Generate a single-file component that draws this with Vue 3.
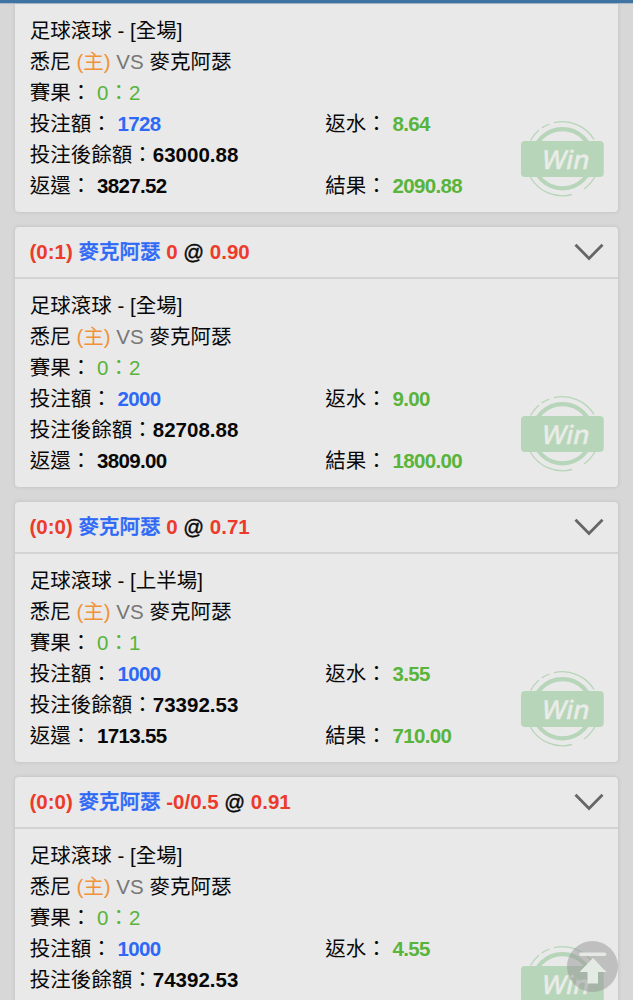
<template>
    <div class="page">
        <div class="top-bar"></div>

        <div class="bet-list">
            <div v-for="(bet, index) in bets" :key="index" class="bet-card">
                <div v-if="bet.odds" class="bet-header">
                    <div class="bet-title">
                        <span class="red">({{ bet.score }})</span>&#32;<span class="team">麥克阿瑟</span>&#32;<span class="red">{{ bet.handicap }}</span>&#32;<span class="at">@</span>&#32;<span class="red">{{ bet.odds }}</span>
                    </div>
                    <svg class="chevron" width="30" height="18" viewBox="0 0 30 18">
                        <path d="M1.5 1.8 L15 15.4 L28.5 1.8" fill="none" stroke="#666" stroke-width="2.8" />
                    </svg>
                </div>

                <div class="bet-body">
                    <div class="row">足球滾球 - [{{ bet.period }}]</div>
                    <div class="row">悉尼 <span class="home">(主)</span> <span class="vs">VS</span> 麥克阿瑟</div>
                    <div class="row">賽果： <span class="green">{{ bet.result }}</span></div>
                    <div class="row split">
                        <div>投注額： <b class="value blue">{{ bet.stake }}</b></div>
                        <div>返水： <b class="value green">{{ bet.rebate }}</b></div>
                    </div>
                    <div class="row">投注後餘額：<b>{{ bet.balance }}</b></div>
                    <div v-if="bet.payout" class="row split">
                        <div>返還： <b class="value">{{ bet.payout }}</b></div>
                        <div>結果： <b class="value green">{{ bet.profit }}</b></div>
                    </div>
                </div>

                <svg class="stamp" width="84" height="76" viewBox="0 0 84 76">
                    <g fill="none" stroke="#b7d5b8">
                        <circle cx="41.5" cy="37.7" r="29.6" stroke-width="4.2" />
                        <path
                            d="M9.5 19.5 A37 37 0 0 1 18 9 M20.8 6.9 A37 37 0 0 1 28.5 3 M33 1.7 A37 37 0 0 1 73 18.3 M9.3 56 A37 37 0 0 0 51 73.5 M63 68 A37 37 0 0 0 74 55.5"
                            stroke-width="1.3"
                        />
                    </g>
                    <rect x="0" y="20" width="82.7" height="36" rx="4" fill="#b7d5b8" />
                    <text x="0" y="0" transform="translate(19.5 47.5) skewX(-12)" class="stamp-text" textLength="47.5" lengthAdjust="spacingAndGlyphs">Win</text>
                </svg>
            </div>
        </div>

        <button class="to-top">
            <svg width="51" height="51" viewBox="0 0 51 51">
                <path d="M14 13.2 H37.5" stroke="#e6e8e6" stroke-width="3.6" stroke-linecap="round" />
                <path d="M26 17 L39.5 31 H31 V42.5 H20.5 V31 H12.5 Z" fill="#e3ebe4" />
            </svg>
        </button>
    </div>
</template>

<script setup>
const bets = [
    { period: '全場', result: '0：2', stake: '1728', rebate: '8.64', balance: '63000.88', payout: '3827.52', profit: '2090.88' },
    { score: '0:1', handicap: '0', odds: '0.90', period: '全場', result: '0：2', stake: '2000', rebate: '9.00', balance: '82708.88', payout: '3809.00', profit: '1800.00' },
    { score: '0:0', handicap: '0', odds: '0.71', period: '上半場', result: '0：1', stake: '1000', rebate: '3.55', balance: '73392.53', payout: '1713.55', profit: '710.00' },
    { score: '0:0', handicap: '-0/0.5', odds: '0.91', period: '全場', result: '0：2', stake: '1000', rebate: '4.55', balance: '74392.53', payout: '', profit: '' }
]
</script>

<style>
body {
    background: #d7d7d7;
    overflow: hidden;
}
</style>

<style scoped>
.page {
    position: relative;
    height: 1000px;
    overflow: hidden;
    background: #d7d7d7;
    font-family: "Liberation Sans", "Noto Sans CJK TC", sans-serif;
    font-size: 20.5px;
    color: #080808;
}

.top-bar {
    position: relative;
    z-index: 1;
    height: 3px;
    background: #3f73a1;
    box-shadow: 0 1px 1px rgba(63, 115, 161, 0.3);
}

.bet-list {
    display: flex;
    flex-direction: column;
    gap: 15px;
    padding: 0.7px 15px 0 15px;
}

.bet-card {
    position: relative;
    flex-shrink: 0;
    background: #e9e9e9;
    border-radius: 4px;
    box-shadow: 0 0 4px rgba(0, 0, 0, 0.12);
}

.bet-card:first-child {
    border-radius: 0 0 4px 4px;
}

.bet-header {
    display: flex;
    align-items: center;
    justify-content: space-between;
    box-sizing: border-box;
    height: 52.1px;
    padding: 0 14.5px 0 14.5px;
    border-bottom: 2px solid #d3d3d3;
}

.bet-title {
    line-height: 30px;
    font-weight: bold;
    white-space: nowrap;
}

.team {
    color: #2d69f6;
    font-weight: 500;
    -webkit-text-stroke: 0.4px #2d69f6;
}

.at {
    font-weight: normal;
    -webkit-text-stroke: 0.4px #080808;
}

.bet-body {
    box-sizing: border-box;
    height: 208px;
    padding: 12.5px 14.8px 0;
}

.row {
    height: 30.9px;
    line-height: 30.9px;
    white-space: nowrap;
}

.split {
    display: grid;
    grid-template-columns: 295.5px 1fr;
}

.value {
    letter-spacing: -0.65px;
}

.red {
    color: #ec3a2b;
}

.blue {
    color: #2d69f6;
}

.green {
    color: #58b43a;
}

.home {
    color: #f0923a;
}

.vs {
    color: #777;
}

/* cachet "Win" en bas à droite de la carte */
.stamp {
    position: absolute;
    right: 13px;
    bottom: 15px;
}

.stamp-text {
    font-family: "Noto Sans", sans-serif;
    font-size: 26px;
    font-weight: 500;
    fill: #e9ece9;
    stroke: #e9ece9;
    stroke-width: 0.4px;
}

.to-top {
    position: absolute;
    right: 15px;
    bottom: 8px;
    width: 51px;
    height: 51px;
    padding: 0;
    border: none;
    border-radius: 50%;
    background: rgba(150, 150, 150, 0.5);
}

.to-top svg {
    display: block;
}
</style>
